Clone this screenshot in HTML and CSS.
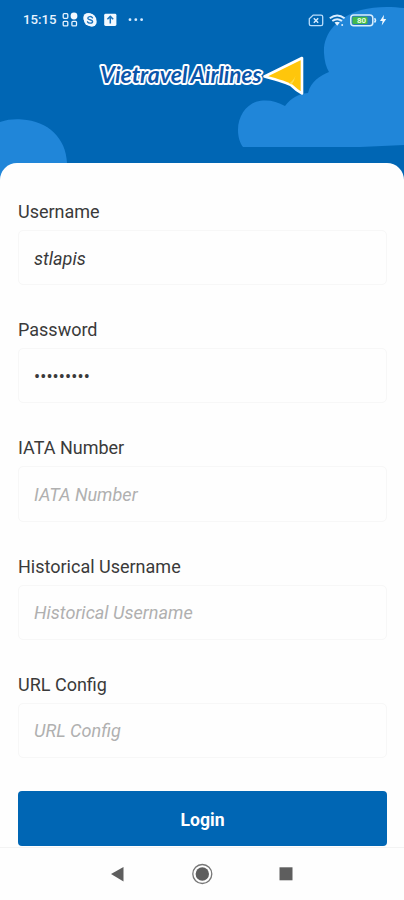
FILE: index.html
```html
<!DOCTYPE html>
<html lang="en">
<head>
<meta charset="utf-8">
<meta name="viewport" content="width=device-width, initial-scale=1">
<title>Vietravel Airlines</title>
<link rel="stylesheet" href="styles.css">
</head>
<body>
<div class="screen">
  <header class="hero">
    <svg class="clouds" viewBox="0 0 404 180" aria-hidden="true">
      <path d="M0 122C8 119.500 14 119 22 119.500C48 121 66 138 67 163V180H0Z"/>
      <path d="M404 8C392 6.500 375 6 361 10C337 17 323 34 324 53C324.500 61 326 67 329 72C320 76 311 81 308 93C298 94 291 98 285 106C278 102 271 100 263 100.500C249 101 238 114 238 130C238 137 240 143 243 147H360L404 145Z"/>
    </svg>
    <div class="status">
      <span class="time">15:15</span>
      <svg class="status-left" viewBox="60 10 90 20" aria-hidden="true">
        <g fill="none" stroke="#e6f3ff" stroke-width="1.300">
          <rect x="63.200" y="13.700" width="4.600" height="4.600" rx="1"/>
          <rect x="63.200" y="21.300" width="4.600" height="4.600" rx="1"/>
          <rect x="71.900" y="21.300" width="4.600" height="4.600" rx="1"/>
        </g>
        <circle cx="74" cy="16" r="3.400" fill="#f2f9ff"/>
        <circle cx="88.200" cy="17.800" r="4.900" fill="#f2f9ff"/>
        <circle cx="91.800" cy="21.800" r="4.900" fill="#f2f9ff"/>
        <circle cx="90" cy="19.800" r="6.200" fill="#f2f9ff"/>
        <path d="M92.500 17.800C91.500 16 87.800 16.200 87.800 18.200C87.800 20.200 92.600 19.200 92.600 21.500C92.600 23.600 88.500 23.700 87.500 21.800" fill="none" stroke="#1872bc" stroke-width="1.400" stroke-linecap="round"/>
        <rect x="104.200" y="13.800" width="12.200" height="12.200" rx="1.400" fill="#f2f9ff"/>
        <path d="M110.300 23.500V17.500M107.400 19.300L110.300 16.400L113.200 19.300" fill="none" stroke="#1872bc" stroke-width="1.500"/>
        <g fill="#d7ebff"><circle cx="130" cy="19.700" r="1.400"/><circle cx="135.800" cy="19.700" r="1.400"/><circle cx="141.600" cy="19.700" r="1.400"/></g>
      </svg>
      <svg class="status-right" viewBox="305 10 85 20" aria-hidden="true">
        <path d="M313.200 15.100H321Q322.700 15.100 322.700 16.800V24Q322.700 25.700 321 25.700H311Q309.300 25.700 309.300 24V18.800Z" fill="none" stroke="#b9dcfa" stroke-width="1.300"/>
        <path d="M313.800 18.200L318.200 22.800M318.200 18.200L313.800 22.800" stroke="#d9edff" stroke-width="1.400"/>
        <g fill="none" stroke="#d9edff" stroke-width="1.900"><path d="M329.800 18.300Q337.200 12.500 344.600 18.300"/><path d="M332.300 21Q337.200 17.300 342 21"/></g>
        <path d="M334.500 22.600Q337.200 20.700 339.800 22.600L337.200 25.700Z" fill="#e8f5ff"/>
        <circle cx="342.200" cy="25" r="1" fill="#d9edff"/>
        <rect x="350.800" y="15" width="22" height="10.800" rx="3" fill="#267cc2" stroke="#d9efff" stroke-width="1.500"/>
        <rect x="352.500" y="16.800" width="15" height="7.200" rx="1" fill="#43b94c"/>
        <path d="M374.500 18.200Q376.500 20.300 374.500 22.500" fill="none" stroke="#d9efff" stroke-width="1.500"/>
        <text x="357" y="23.400" class="battery-level">80</text>
        <path d="M384 14.800L380 21H382.600L381.700 25.500L386.200 19H383.500Z" fill="#f0f8ff"/>
      </svg>
    </div>
    <svg class="logo" viewBox="95 50 215 50" role="img" aria-label="Vietravel Airlines">
      <path d="M264.500 76.500L302 58V93.500Q296 90 291.500 85.500Q287 82.500 264.500 76.500Z" fill="#ffc60b" stroke="#fff" stroke-width="2.600" stroke-linejoin="round"/>
      <path d="M289 83.500Q294 80 295.500 75.500Q294.500 81 291.500 84.500Z" fill="#ffdc4a"/>
      <g class="wordmark">
        <text x="100" y="83" textLength="87.500" lengthAdjust="spacingAndGlyphs">Vietravel</text>
        <text x="190.500" y="83" textLength="71" lengthAdjust="spacingAndGlyphs">Airlines</text>
      </g>
    </svg>
  </header>
  <main class="sheet">
    <form class="form">
      <label class="field"><span>Username</span><input type="text" value="stlapis"></label>
      <label class="field"><span>Password</span><input class="secret" type="text" value="•••••••••"></label>
      <label class="field"><span>IATA Number</span><input type="text" placeholder="IATA Number"></label>
      <label class="field"><span>Historical Username</span><input type="text" placeholder="Historical Username"></label>
      <label class="field"><span>URL Config</span><input type="text" placeholder="URL Config"></label>
      <button type="button">Login</button>
    </form>
  </main>
  <nav class="navbar">
    <svg viewBox="0 0 404 52" aria-hidden="true">
      <path d="M111 26L123.500 19V33.500Z" fill="#5e5e5e"/>
      <circle cx="202.300" cy="26" r="9.500" fill="none" stroke="#777" stroke-width="1.300"/>
      <circle cx="202.300" cy="26" r="6.700" fill="#5e5e5e"/>
      <rect x="279.500" y="19.300" width="13" height="13" fill="#5e5e5e"/>
    </svg>
  </nav>
</div>
</body>
</html>
```
FILE: styles.css
```css
* { box-sizing: border-box; }

body {
  margin: 0;
  background: #fefefe;
  font-family: Roboto, "Liberation Sans", sans-serif;
}

.screen {
  display: flex;
  flex-direction: column;
  width: 404px;
  height: 900px;
  overflow: hidden;
}

.hero {
  position: relative;
  flex: none;
  height: 180px;
  background: #0066b4;
}

.clouds {
  position: absolute;
  inset: 0;
  width: 404px;
  height: 180px;
  fill: #2086d9;
}

.status {
  position: relative;
  display: flex;
  align-items: center;
  height: 40px;
  padding: 0 14px 0 23px;
}

.time {
  width: 37px;
  color: #e8f4ff;
  font-size: 13.2px;
  font-weight: 500;
  line-height: 20px;
  white-space: nowrap;
}

.status-left { width: 90px; height: 20px; }
.status-right { width: 85px; height: 20px; margin-left: auto; }

.battery-level {
  fill: #eaffdf;
  font-size: 8px;
  font-weight: 700;
}

.logo {
  position: relative;
  display: block;
  width: 215px;
  height: 50px;
  margin: 10px 0 0 95px;
}

.wordmark {
  fill: #0a55aa;
  stroke: #fff;
  stroke-width: 3.8px;
  stroke-linejoin: round;
  paint-order: stroke;
  font-family: Lato, "Noto Sans", sans-serif;
  font-size: 23px;
  font-style: italic;
  font-weight: 700;
}

.sheet {
  position: relative;
  flex: 1;
  min-height: 0;
  margin-top: -17px;
  padding: 39px 17px 0 18px;
  border-radius: 17px 17px 0 0;
  background: #fefefe;
}

.form {
  display: flex;
  flex-direction: column;
  gap: 35px;
}

.field {
  display: flex;
  flex-direction: column;
  gap: 8px;
  color: #3a3a3a;
  font-size: 18px;
  line-height: 20px;
}

.field input {
  width: 100%;
  height: 55.2px;
  padding: 1px 15px 0;
  border: 1px solid #f7f7f7;
  border-radius: 5px;
  outline: 0;
  background: #fefefe;
  color: #3a3a3a;
  font: italic 18.1px Roboto, "Liberation Sans", sans-serif;
}

.field input::placeholder { color: #b0b0b0; opacity: 1; }

.field .secret { font-style: normal; letter-spacing: .1px; }

.form button {
  height: 55px;
  margin-top: -2px;
  padding: 3px 0 0;
  border: 0;
  border-radius: 4px;
  background: #0066b4;
  color: #fff;
  font: 700 17.6px Roboto, "Liberation Sans", sans-serif;
}

.navbar {
  position: relative;
  flex: none;
  height: 53px;
  border-top: 1px solid #f3f3f3;
  background: #fefefe;
}

.navbar svg { display: block; width: 404px; height: 52px; }
```
